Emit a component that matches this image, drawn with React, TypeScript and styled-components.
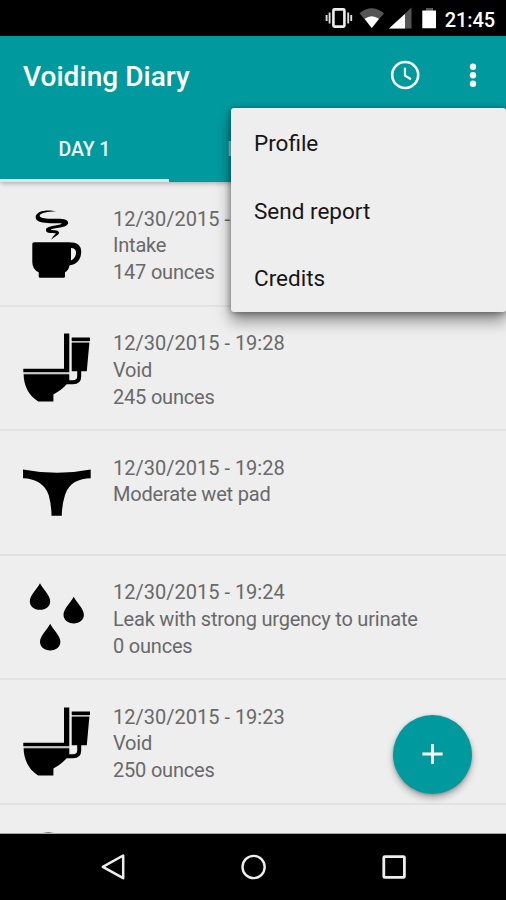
import React from "react";
import styled, { createGlobalStyle } from "styled-components";

const TEAL = "#009a9e";
const SURFACE = "#eeeeee";

const GlobalStyle = createGlobalStyle`
  * { box-sizing: border-box; }
  body { margin: 0; background: #000; font-family: Roboto, "Noto Sans", sans-serif; }
`;

const Screen = styled.div`
  position: relative;
  width: 506px;
  height: 900px;
  display: flex;
  flex-direction: column;
  overflow: hidden;
  background: ${SURFACE};
`;

const StatusBar = styled.div`
  flex: 0 0 36px;
  display: flex;
  justify-content: flex-end;
  background: #000;
`;

const StatusIcons = styled.svg`
  display: block;
  width: 120px;
  height: 36px;
`;

const Clock = styled.span`
  width: 66px;
  padding: 3px 11px 0 0;
  display: flex;
  justify-content: flex-end;
  align-items: center;
  height: 36px;
  color: #fff;
  font-size: 20px;
  font-weight: 500;
  letter-spacing: -0.1px;
  white-space: nowrap;
`;

const Header = styled.header`
  flex: 0 0 146px;
  z-index: 1;
  display: flex;
  flex-direction: column;
  background: ${TEAL};
  color: #fff;
  box-shadow: 0 1px 5px rgba(0, 0, 0, 0.32);
`;

const Toolbar = styled.div`
  height: 80px;
  display: flex;
  align-items: center;
  padding: 1px 14px 0 23px;
`;

const Title = styled.h1`
  flex: 1;
  margin: 0;
  font-size: 28px;
  font-weight: 500;
  letter-spacing: 0.05px;
`;

const ToolButton = styled.button<{ $gap?: number }>`
  width: 38px;
  height: 38px;
  margin: 0 ${(p) => p.$gap ?? 0}px 4px 0;
  padding: 0;
  border: 0;
  background: none;
`;

const Glyph = styled.svg`
  display: block;
`;

const Tabs = styled.nav`
  height: 66px;
  display: flex;
`;

const Tab = styled.div<{ $active?: boolean }>`
  width: 169px;
  display: flex;
  align-items: center;
  justify-content: center;
  padding: 4px 0 ${(p) => (p.$active ? 0 : 3)}px;
  border-bottom: ${(p) => (p.$active ? "3px solid #e0e6e6" : "0")};
  color: ${(p) => (p.$active ? "#f2fbfb" : "rgba(255, 255, 255, 0.6)")};
  font-size: 19.5px;
  font-weight: 500;
  letter-spacing: -0.1px;
`;

const List = styled.main`
  flex: 1;
  min-height: 0;
  overflow: hidden;
  border-bottom: 1px solid #aaa;
`;

const Row = styled.article`
  height: 124.5px;
  display: flex;
  padding: 23px 0 0 23px;
  border-bottom: 2px solid #e2e2e2;
`;

const RowIcon = styled.svg`
  flex: none;
  width: 68px;
  height: 68px;
  margin: 4.5px 22px 0 0;
  overflow: visible;
`;

const Lines = styled.div`
  padding-top: 0.6px;
  color: #696969;
  font-size: 20px;
  line-height: 26.7px;
  white-space: nowrap;
`;

const Line = styled.div<{ $numeric: boolean }>`
  letter-spacing: ${(p) => (p.$numeric ? "0" : "-0.2px")};
`;

const Menu = styled.div`
  position: absolute;
  z-index: 3;
  top: 108px;
  right: 0;
  width: 275px;
  height: 203.5px;
  display: flex;
  flex-direction: column;
  background: ${SURFACE};
  border-radius: 3px;
  box-shadow: 0 9px 15px rgba(0, 0, 0, 0.42), 0 1px 6px rgba(0, 0, 0, 0.4);
`;

const MenuItem = styled.div`
  height: 67.5px;
  display: flex;
  align-items: center;
  padding: 3px 0 0 23px;
  color: #161616;
  font-size: 22.5px;
`;

const AddButton = styled.button`
  position: absolute;
  z-index: 2;
  top: 714.5px;
  left: 393px;
  width: 79px;
  height: 79px;
  display: grid;
  place-items: center;
  padding: 0;
  border: 0;
  border-radius: 50%;
  background: ${TEAL};
  box-shadow: 0 4px 7px rgba(0, 0, 0, 0.3), 0 1px 3px rgba(0, 0, 0, 0.2);
`;

const NavBar = styled.footer`
  flex: 0 0 66px;
  display: flex;
  justify-content: space-between;
  align-items: center;
  padding: 0 96px 0 97px;
  background: #000;
`;

const CupIcon = () => (
  <RowIcon viewBox="0 0 68 68">
    <path d="M33.5 1.6C26 -.8 13 .2 12.6 7.1C12.4 12.6 21 13 27 13.2C32 13.4 36 12.9 39 13.5C35 16.3 22.8 15.3 23 20.2C23.2 24 29.8 22.8 33 23.4C31.5 25 29 27 28.2 29.8C31 27 36.6 25 36 22.3C35.3 19.5 29 20.8 27.8 19.5C30 17.8 45 18.3 45.2 12.8C44.8 7.5 33 9.3 25 8.7C20 8.4 16.3 7.8 16.7 5.6C17.5 2.3 27 1.4 33.5 1.6Z" />
    <path fillRule="evenodd" d="M11 32.2H46Q58.5 32.2 58.2 42C58 51.5 51.5 54.7 46.5 55.5Q45.5 60.5 42 62.3V66.5Q42 67.8 40.5 67.8H17Q15.7 67.8 15.7 66.5V62.3Q9.3 59.5 9.3 52V34Q9.3 32.2 11 32.2ZM48 38V50.5Q53 48 53 42.5Q53 38 48 38Z" />
  </RowIcon>
);

const ToiletIcon = () => (
  <RowIcon viewBox="0 0 68 68">
    <path d="M41-.5H46.3V38.2H.3V34.8H41ZM48.7 3.5H67V6.9H48.7ZM48.7 8.4H66.4L63.8 37.3H48.7Z" />
    <path d="M.6 40.3H46.3V46.5C43 52 37 57 30.4 60.5V67.4H15.2C6 62 .8 52 .6 40.3Z" />
    <path d="M56.2 36V42.5Q56.2 48.3 50 48.3H43" fill="none" stroke="#000" strokeWidth="4" />
    <path d="M.6 39.2H46.3M49 7.7H66.5" stroke="#b4b4b4" strokeWidth="1" />
  </RowIcon>
);

const ThongIcon = () => (
  <RowIcon viewBox="0 0 68 68">
    <path d="M0 10.4Q17 13.7 34 13.7Q51 13.7 67.7 10.4V19.2C56 19.5 46 23.5 42 36Q38.8 46.5 38.8 56.8H28.5Q28.5 46.5 25.8 36.5C22 24.5 12 19.5 0 19.2Z" />
  </RowIcon>
);

const DROP = "M0 0C3 5.6 10.2 12.4 10.2 18C10.2 23.2 5.8 26.6 0 26.6C-5.8 26.6 -10.2 23.2 -10.2 18C-10.2 12.4 -3 5.6 0 0Z";

const DropsIcon = () => (
  <RowIcon viewBox="0 0 68 68">
    <path d={DROP} transform="translate(17 .2)" />
    <path d={DROP} transform="translate(50.7 13.8)" />
    <path d={DROP} transform="translate(27.2 40.8)" />
  </RowIcon>
);

const entries = [
  { icon: CupIcon, lines: ["12/30/2015 - 19:30", "Intake", "147 ounces"] },
  { icon: ToiletIcon, lines: ["12/30/2015 - 19:28", "Void", "245 ounces"] },
  { icon: ThongIcon, lines: ["12/30/2015 - 19:28", "Moderate wet pad"] },
  { icon: DropsIcon, lines: ["12/30/2015 - 19:24", "Leak with strong urgency to urinate", "0 ounces"] },
  { icon: ToiletIcon, lines: ["12/30/2015 - 19:23", "Void", "250 ounces"] },
  { icon: CupIcon, lines: [] },
];

export default function App() {
  return (
    <>
      <GlobalStyle />
      <Screen>
        <StatusBar>
          <StatusIcons viewBox="320 0 120 36">
            <rect x="333.4" y="9.4" width="11" height="17.2" rx="1" fill="none" stroke="#eee" strokeWidth="2.6" />
            <path d="M329.6 12.5V23.5M348.2 12.5V23.5M326.6 15V21M351.2 15V21" stroke="#ddd" strokeWidth="1.9" />
            <path d="M359.5 13.2Q371.5 3.5 384 13.2L371.8 28Z" fill="#555" />
            <path d="M364.6 18.8Q371.6 13.6 379 18.8L371.8 28Z" fill="#fff" />
            <path d="M411.5 7.5V28.5H389Z" fill="#555" />
            <path d="M405 14V28.5H389Z" fill="#fff" />
            <path d="M426 8h6.5v2.5H436v17.7H422.3V10.5H426Z" fill="#fff" />
            <path d="M426 8h6.5v2.5H426Z" fill="#555" />
          </StatusIcons>
          <Clock>21:45</Clock>
        </StatusBar>
        <Header>
          <Toolbar>
            <Title>Voiding Diary</Title>
            <ToolButton $gap={30} aria-label="History">
              <Glyph width="38" height="38" viewBox="0 0 38 38" fill="none" stroke="#fff">
                <circle cx="19.2" cy="19" r="13" strokeWidth="2.6" />
                <path d="M19 11.8V19.6L25 23.3" strokeWidth="2.2" />
              </Glyph>
            </ToolButton>
            <ToolButton aria-label="More options">
              <Glyph width="38" height="38" viewBox="0 0 38 38" fill="#fff">
                <circle cx="19" cy="10.7" r="3.2" />
                <circle cx="19" cy="19.2" r="3.2" />
                <circle cx="19" cy="27.7" r="3.2" />
              </Glyph>
            </ToolButton>
          </Toolbar>
          <Tabs>
            <Tab $active>DAY 1</Tab>
            <Tab>DAY 2</Tab>
            <Tab>DAY 3</Tab>
          </Tabs>
        </Header>
        <List>
          {entries.map(({ icon: Icon, lines }, i) => (
            <Row key={i}>
              <Icon />
              <Lines>
                {lines.map((line) => (
                  <Line key={line} $numeric={line.includes("/")}>
                    {line}
                  </Line>
                ))}
              </Lines>
            </Row>
          ))}
        </List>
        <NavBar>
          <Glyph width="32" height="32" viewBox="0 0 32 32" fill="none" stroke="#eee" strokeWidth="2.5" strokeLinejoin="round">
            <path d="M5.8 15.8L26.2 4.5V27.2Z" />
          </Glyph>
          <Glyph width="32" height="32" viewBox="0 0 32 32" fill="none" stroke="#eee" strokeWidth="2.4">
            <circle cx="15.6" cy="16" r="11.1" />
          </Glyph>
          <Glyph width="32" height="32" viewBox="0 0 32 32" fill="none" stroke="#eee" strokeWidth="2.8">
            <rect x="5.8" y="5.6" width="20.6" height="20.8" rx="1" />
          </Glyph>
        </NavBar>
        <AddButton aria-label="Add entry">
          <Glyph width="24" height="24" viewBox="0 0 24 24" stroke="#fff" strokeWidth="3">
            <path d="M1.4 12H21.6M11.5 2V22" />
          </Glyph>
        </AddButton>
        <Menu>
          <MenuItem>Profile</MenuItem>
          <MenuItem>Send report</MenuItem>
          <MenuItem>Credits</MenuItem>
        </Menu>
      </Screen>
    </>
  );
}
